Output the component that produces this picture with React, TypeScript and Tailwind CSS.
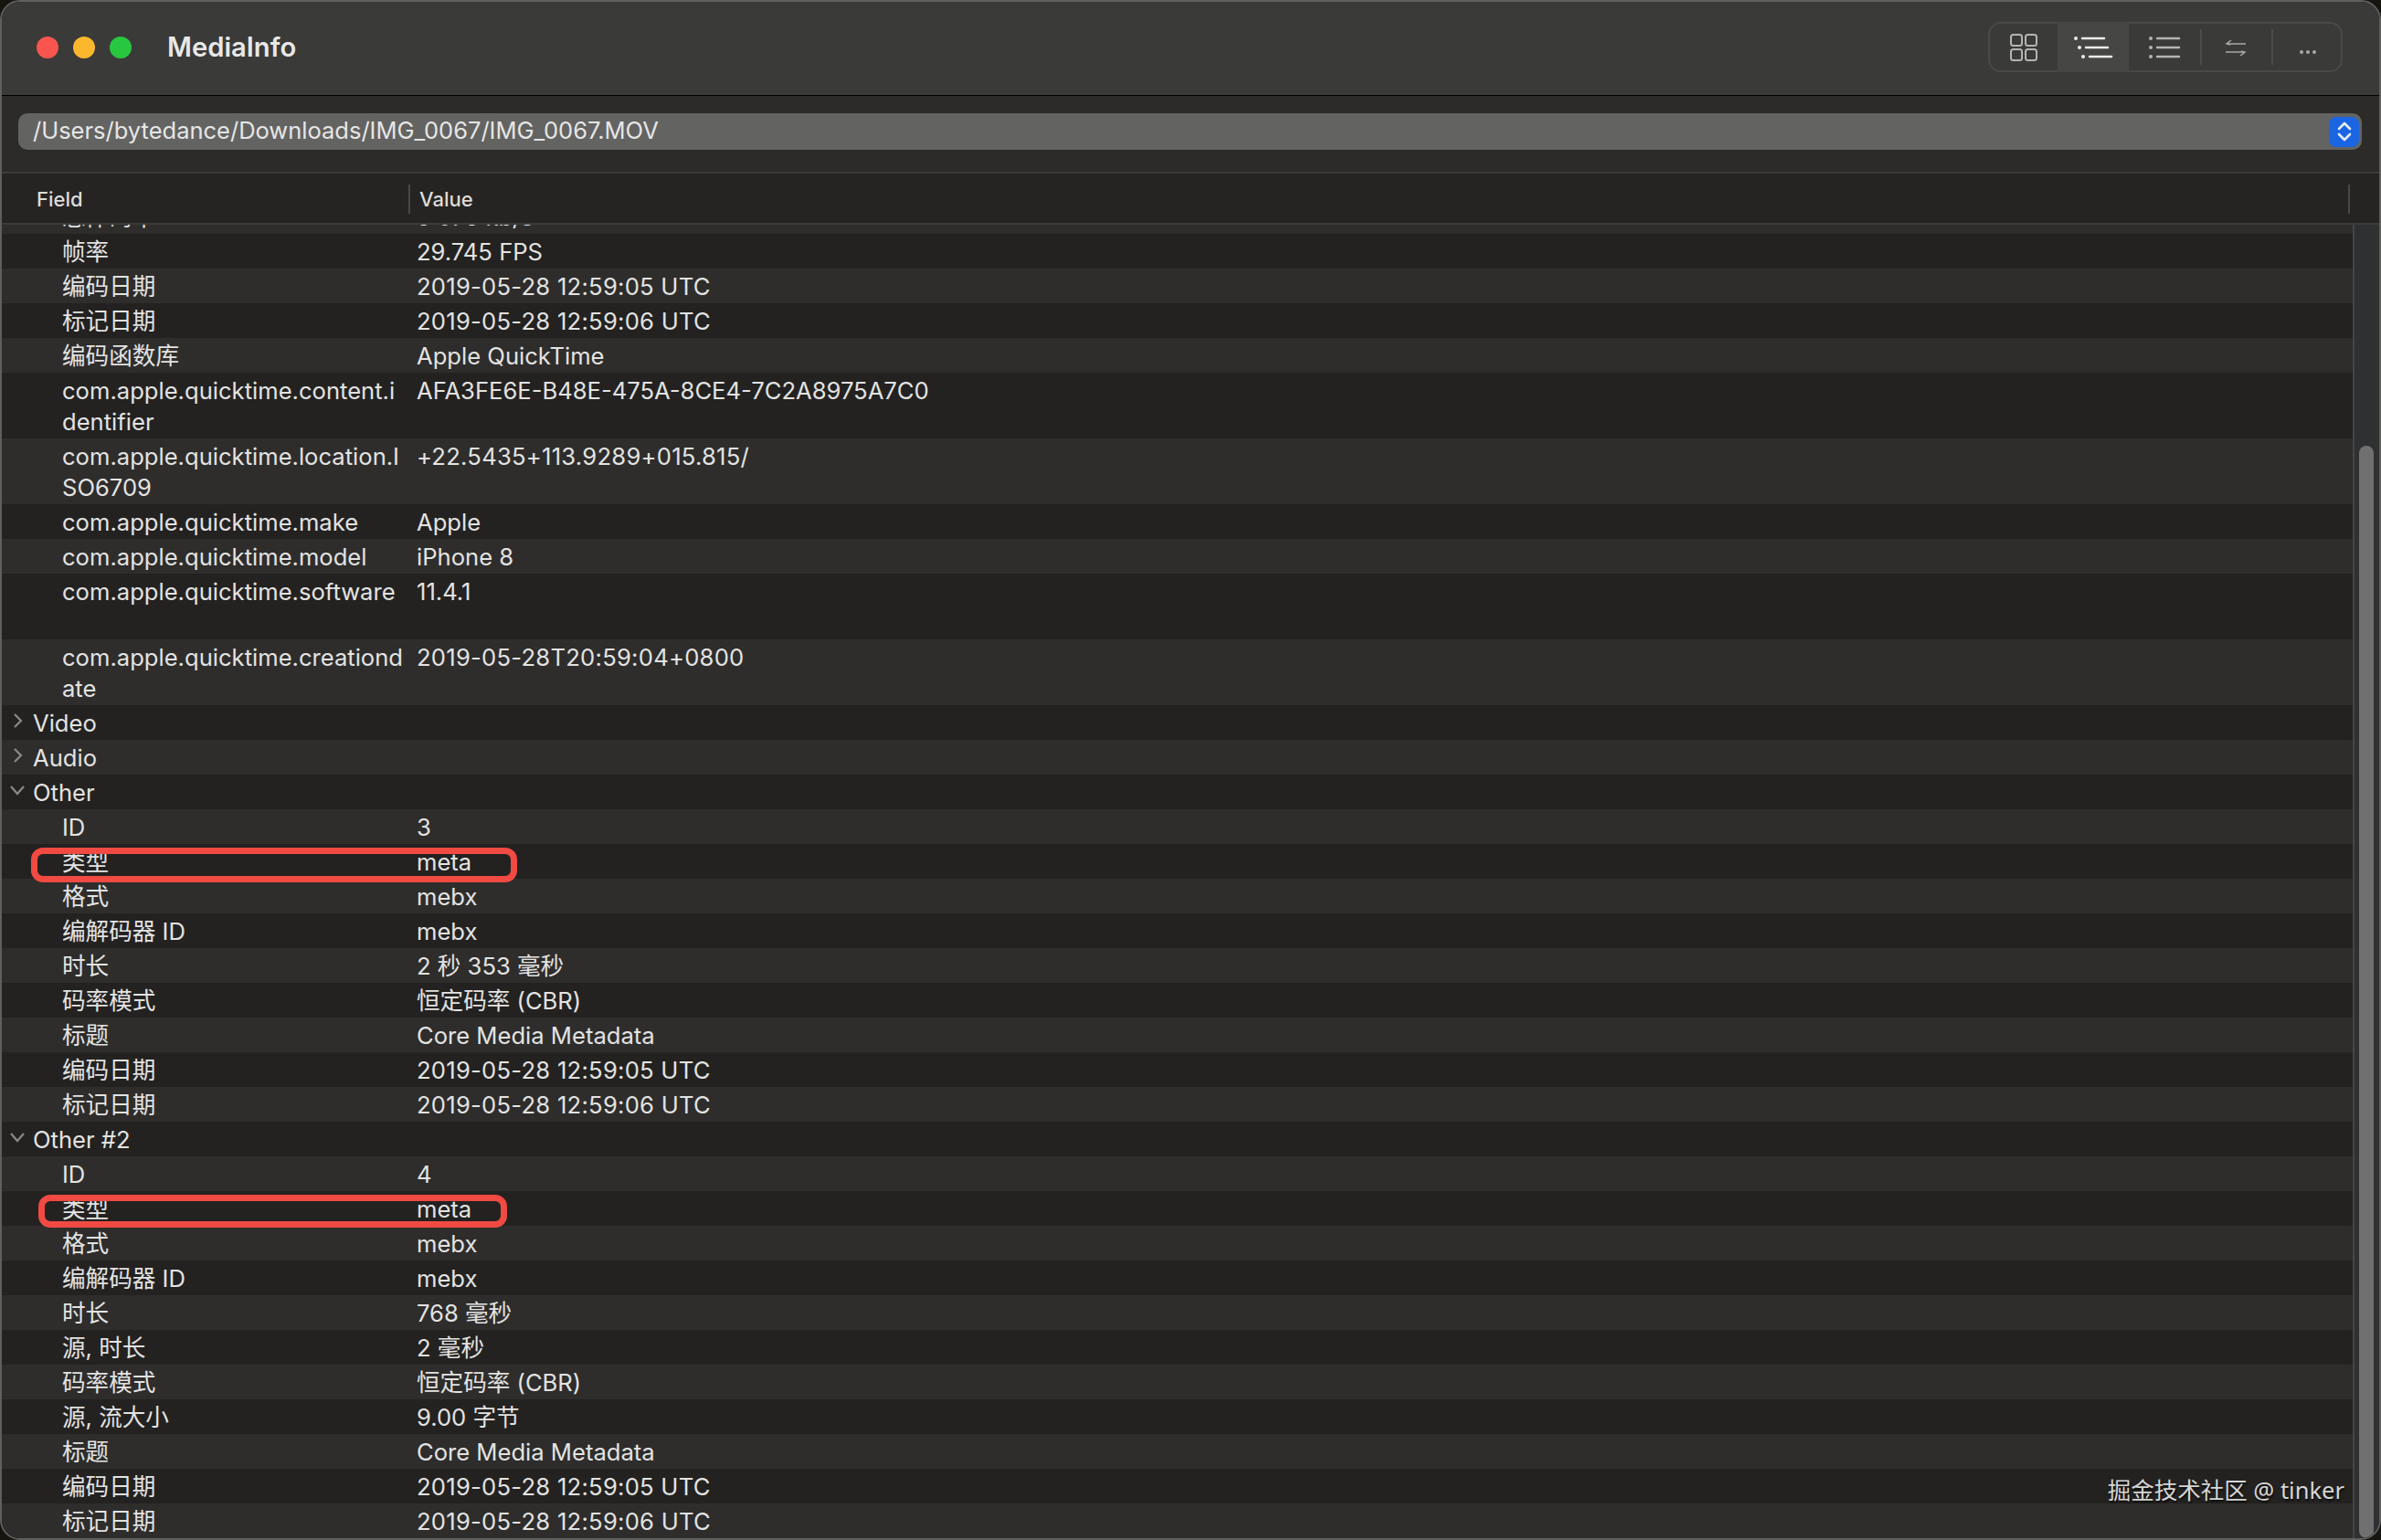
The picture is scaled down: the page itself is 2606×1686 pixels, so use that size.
type Row = {
  field: string;
  value?: string;
  toggle?: "open" | "closed";
  mark?: "wide" | "narrow";
};

const rows: Row[] = [
  { field: "总体码率", value: "5 075 kb/s" },
  { field: "帧率", value: "29.745 FPS" },
  { field: "编码日期", value: "2019-05-28 12:59:05 UTC" },
  { field: "标记日期", value: "2019-05-28 12:59:06 UTC" },
  { field: "编码函数库", value: "Apple QuickTime" },
  { field: "com.apple.quicktime.content.i\ndentifier", value: "AFA3FE6E-B48E-475A-8CE4-7C2A8975A7C0" },
  { field: "com.apple.quicktime.location.I\nSO6709", value: "+22.5435+113.9289+015.815/" },
  { field: "com.apple.quicktime.make", value: "Apple" },
  { field: "com.apple.quicktime.model", value: "iPhone 8" },
  { field: "com.apple.quicktime.software\n ", value: "11.4.1" },
  { field: "com.apple.quicktime.creationd\nate", value: "2019-05-28T20:59:04+0800" },
  { field: "Video", toggle: "closed" },
  { field: "Audio", toggle: "closed" },
  { field: "Other", toggle: "open" },
  { field: "ID", value: "3" },
  { field: "类型", value: "meta", mark: "wide" },
  { field: "格式", value: "mebx" },
  { field: "编解码器 ID", value: "mebx" },
  { field: "时长", value: "2 秒 353 毫秒" },
  { field: "码率模式", value: "恒定码率 (CBR)" },
  { field: "标题", value: "Core Media Metadata" },
  { field: "编码日期", value: "2019-05-28 12:59:05 UTC" },
  { field: "标记日期", value: "2019-05-28 12:59:06 UTC" },
  { field: "Other #2", toggle: "open" },
  { field: "ID", value: "4" },
  { field: "类型", value: "meta", mark: "narrow" },
  { field: "格式", value: "mebx" },
  { field: "编解码器 ID", value: "mebx" },
  { field: "时长", value: "768 毫秒" },
  { field: "源, 时长", value: "2 毫秒" },
  { field: "码率模式", value: "恒定码率 (CBR)" },
  { field: "源, 流大小", value: "9.00 字节" },
  { field: "标题", value: "Core Media Metadata" },
  { field: "编码日期", value: "2019-05-28 12:59:05 UTC" },
  { field: "标记日期", value: "2019-05-28 12:59:06 UTC" },
];

function GridIcon() {
  return (
    <svg width="32" height="32" viewBox="0 0 32 32" fill="none" stroke="#b4b4b3" strokeWidth="2">
      <rect x="2" y="2" width="12" height="12" rx="2.5" />
      <rect x="18" y="2" width="12" height="12" rx="2.5" />
      <rect x="2" y="18" width="12" height="12" rx="2.5" />
      <rect x="18" y="18" width="12" height="12" rx="2.5" />
    </svg>
  );
}

function OutlineIcon() {
  return (
    <svg width="44" height="28" viewBox="0 0 44 28" fill="none" stroke="#ececeb" strokeWidth="2.5" strokeLinecap="round">
      <circle cx="3" cy="4" r="2" fill="#ececeb" stroke="none" />
      <circle cx="7" cy="14" r="2" fill="#ececeb" stroke="none" />
      <circle cx="11" cy="24" r="2" fill="#ececeb" stroke="none" />
      <path d="M10 4h24M14 14h24M18 24h24" />
    </svg>
  );
}

function ListIcon() {
  return (
    <svg width="36" height="28" viewBox="0 0 36 28" fill="none" stroke="#b4b4b3" strokeWidth="2.5" strokeLinecap="round">
      <circle cx="3" cy="4" r="2" fill="#b4b4b3" stroke="none" />
      <circle cx="3" cy="14" r="2" fill="#b4b4b3" stroke="none" />
      <circle cx="3" cy="24" r="2" fill="#b4b4b3" stroke="none" />
      <path d="M10 4h24M10 14h24M10 24h24" />
    </svg>
  );
}

function SwapIcon() {
  return (
    <svg width="24" height="18" viewBox="0 0 24 18" fill="none" stroke="#a8a8a7" strokeWidth="1.5">
      <path d="M23 5H2M7 1 2 5l4 1" />
      <path d="M1 14h21M17 18l5-4-4-1" />
    </svg>
  );
}

function MoreIcon() {
  return (
    <svg width="20" height="6" viewBox="0 0 20 6" fill="#a8a8a7" className="mt-[10px]">
      <circle cx="3" cy="3" r="2" />
      <circle cx="10" cy="3" r="2" />
      <circle cx="17" cy="3" r="2" />
    </svg>
  );
}

function Toolbar() {
  return (
    <div className="flex h-[55px] w-[388px] items-stretch rounded-[14px] border-2 border-[#494948]">
      <div className="flex w-[74px] items-center justify-center">
        <GridIcon />
      </div>
      <div className="-my-[2px] flex w-[78px] items-center justify-center bg-[#464645]">
        <OutlineIcon />
      </div>
      <div className="flex w-[78px] items-center justify-center pr-[1px]">
        <ListIcon />
      </div>
      <div className="my-[6px] w-[2px] bg-[#4b4b4a]" />
      <div className="flex w-[76px] items-center justify-center pr-[3px]">
        <SwapIcon />
      </div>
      <div className="my-[6px] w-[2px] bg-[#4b4b4a]" />
      <div className="flex flex-1 items-center justify-center pl-[2px]">
        <MoreIcon />
      </div>
    </div>
  );
}

function Chevron({ open }: { open: boolean }) {
  if (open) {
    return (
      <svg width="18" height="12" viewBox="0 0 18 12" fill="none" stroke="#8a8a89" strokeWidth="2.2" className="-mt-[4px]">
        <path d="M2 2l7 8 7-8" />
      </svg>
    );
  }
  return (
    <svg width="12" height="18" viewBox="0 0 12 18" fill="none" stroke="#8a8a89" strokeWidth="2.2" className="-mt-[4px] ml-[4px]">
      <path d="M2 2l7 7-7 7" />
    </svg>
  );
}

function TreeRow({ row, index }: { row: Row; index: number }) {
  const lines = row.field.split("\n");
  // long numeric values run a little wider than Inter's digits
  const numeric = row.value !== undefined && row.value.length > 10 && /^[+\d]/.test(row.value);
  return (
    <div className={`relative flex pb-[1px] pr-[18px] pt-[3px] ${index % 2 === 0 ? "bg-[#2e2d2c]" : "bg-[#232221]"}`}>
      <div className={`w-[425px] shrink-0 whitespace-pre ${row.toggle ? "pl-[34px]" : "pl-[66px]"}`}>
        {row.toggle && (
          <span className="absolute left-[8px] top-0 flex h-[38px] w-[20px] items-center">
            <Chevron open={row.toggle === "open"} />
          </span>
        )}
        {lines.map((line, i) => (
          <div key={i}>{line}</div>
        ))}
      </div>
      <div className={`whitespace-nowrap pl-[29px] ${numeric ? "tracking-[0.26px]" : ""}`}>{row.value}</div>
      {row.mark === "wide" && (
        <div className="absolute left-[32px] top-[4px] z-10 h-[38px] w-[532px] rounded-[13px] border-[7px] border-[#f04a43]" />
      )}
      {row.mark === "narrow" && (
        <div className="absolute left-[40px] top-[4px] z-10 h-[36px] w-[513px] rounded-[13px] border-[7px] border-[#f04a43]" />
      )}
    </div>
  );
}

export default function App() {
  return (
    <div className="h-[1686px] w-[2606px] overflow-hidden bg-[#17150f] font-['Inter','Noto_Sans_CJK_SC',sans-serif] text-[25.6px] leading-[34px] text-[#e3e3e2]">
      <div className="relative flex h-full flex-col overflow-hidden rounded-[22px] border-2 border-[#5f5f5e]">
        <header className="flex h-[103px] shrink-0 items-center border-b border-black bg-[#3a3a39] pb-[3px] pl-[38px] pr-[40px]">
          <div className="flex gap-[16px]">
            <span className="h-[24px] w-[24px] rounded-full bg-[#f9554e]" />
            <span className="h-[24px] w-[24px] rounded-full bg-[#fcb82c]" />
            <span className="h-[24px] w-[24px] rounded-full bg-[#28c740]" />
          </div>
          <h1 className="ml-[39px] text-[29.2px] font-semibold text-[#e8e8e7]">MediaInfo</h1>
          <div className="ml-auto">
            <Toolbar />
          </div>
        </header>

        <div className="h-[85px] shrink-0 border-b-2 border-[#3b3b3a] bg-[#2c2b2a] pl-[18px] pr-[19px] pt-[19px]">
          <div className="flex h-[40px] items-center rounded-[10px] bg-[#636362] pl-[16px] pr-[3px] text-[25.5px] text-[#e6e6e5]">
            <span className="-mt-[2px]">/Users/bytedance/Downloads/IMG_0067/IMG_0067.MOV</span>
            <span className="ml-auto flex h-[33px] w-[33px] items-center justify-center rounded-[8px] bg-[#1a65e2]">
              <svg width="20" height="26" viewBox="0 0 20 26" fill="none" stroke="#e4ecfb" strokeWidth="2.6" strokeLinecap="round" strokeLinejoin="round">
                <path d="M4 10l6-6 6 6M4 16l6 6 6-6" />
              </svg>
            </span>
          </div>
        </div>

        <div className="flex h-[54px] shrink-0 items-center bg-[#262423] pt-[1px] text-[22px] font-medium text-[#dcdcdb]">
          <span className="w-[445px] pl-[38px]">Field</span>
          <span className="h-[32px] w-[2px] bg-[#484847]" />
          <span className="pl-[10px]">Value</span>
          <span className="ml-auto mr-[32px] h-[32px] w-[2px] bg-[#484847]" />
        </div>

        <div className="flex min-h-0 flex-1 border-t-2 border-[#3b3b3a]">
          <div className="min-w-0 flex-1 overflow-hidden">
            <div className="-mt-[28px]">
              {rows.map((row, i) => (
                <TreeRow key={i} row={row} index={i} />
              ))}
            </div>
          </div>
          <div className="flex w-[29px] shrink-0 flex-col border-l-2 border-[#454545] bg-[#2f3032] pl-[5px] pr-[6px] pt-[242px]">
            <div className="flex-1 rounded-[8px] bg-[#707070]" />
          </div>
        </div>

        <div className="absolute bottom-[36px] right-[38px] z-20 font-['Noto_Sans','Noto_Sans_CJK_SC',sans-serif] text-[25.5px] leading-[34px] text-[#d6d6d5] [text-shadow:1px_2px_2px_rgba(0,0,0,0.7)]">
          掘金技术社区 @ tinker
        </div>
      </div>
    </div>
  );
}
